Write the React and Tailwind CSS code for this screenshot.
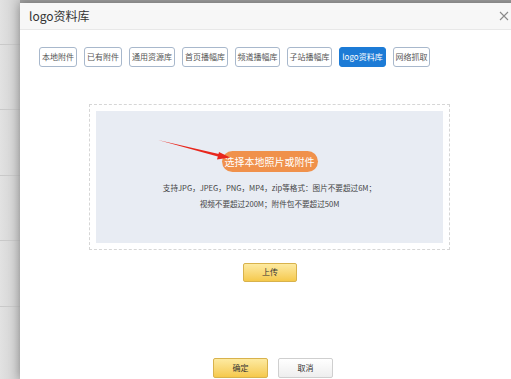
import React from 'react';

const tabs = [
  { label: '本地附件', w: 'w-[38px]' },
  { label: '已有附件', w: 'w-[38px]' },
  { label: '通用资源库', w: 'w-[46px]' },
  { label: '首页播幅库', w: 'w-[46px]' },
  { label: '频道播幅库', w: 'w-[45px]' },
  { label: '子站播幅库', w: 'w-[45px]' },
  { label: 'logo资料库', w: 'w-[47px]', active: true },
  { label: '网络抓取', w: 'w-[37px]' },
];

const font = { fontFamily: '"Microsoft YaHei", "Noto Sans CJK SC", "Noto Sans", sans-serif' };

const App = () => {
  return (
    <div className="relative w-[511px] h-[379px] overflow-hidden bg-[#dedede] flex" style={font}>
      {/* page behind the overlay */}
      <div className="w-[20px] shrink-0 flex flex-col bg-gradient-to-r from-[#e2e2e2] to-[#cfcfcf]">
        <div className="h-[45px] border-b border-[#c9c9c9]" />
        <div className="h-[65px] border-b border-[#c9c9c9]" />
        <div className="h-[66px] border-b border-[#c9c9c9]" />
        <div className="h-[65px] border-b border-[#c9c9c9]" />
        <div className="h-[66px] border-b border-[#c9c9c9]" />
      </div>

      <div className="flex flex-col shrink-0">
        <div className="h-[3px] bg-[#a3a3a3]" />
        <div className="w-[500px] h-[400px] bg-white shadow-[0_0_10px_rgba(0,0,0,0.35)] flex flex-col">
          <div className="h-[27px] bg-[#f7f7f7] border-b border-[#e8e8e8] pl-[9px] pr-[10px] flex items-center justify-between">
            <span className="text-[12px] text-[#333]">logo资料库</span>
            <svg width="10" height="10" viewBox="0 0 10 10" className="mr-[1px]">
              <path d="M1 1L9 9M9 1L1 9" stroke="#8a8a8a" strokeWidth="1.1" />
            </svg>
          </div>

          <div className="pt-[17px] pl-[19px] flex gap-[7px]">
            {tabs.map(t => (
              <div
                key={t.label}
                className={`${t.w} h-[20px] rounded-[3px] border flex items-center justify-center text-[8px] ${t.active ? 'bg-[#1c7bd6] border-[#1c7bd6] text-white' : 'bg-white border-[#a8b8cc] text-[#555]'}`}
              >
                {t.label}
              </div>
            ))}
          </div>

          <div className="mt-[37px] ml-[69px] w-[361px] h-[146px] border border-dashed border-[#d6d6d6] p-[6px]">
            <div className="h-full bg-[#e8ecf3] flex flex-col items-center pt-[40px]">
              <div className="w-[96px] h-[21px] rounded-full bg-[#f0914b] text-white text-[10px] flex items-center justify-center">
                选择本地照片或附件
              </div>
              <div className="mt-[8px] text-[7.6px] leading-[16px] text-[#444] text-center">
                <p>支持JPG，JPEG，PNG，MP4，zip等格式：图片不要超过6M；</p>
                <p>视频不要超过200M；附件包不要超过50M</p>
              </div>
            </div>
          </div>

          <div className="mt-[13px] flex justify-center">
            <button className="w-[54px] h-[19px] border border-[#d8b24c] rounded-[2px] bg-gradient-to-b from-[#fdeaa0] to-[#f5c94a] text-[8px] text-[#333]">
              上传
            </button>
          </div>

          <div className="mt-[76px] pl-[193px] flex gap-[10px]">
            <button className="w-[55px] h-[20px] border border-[#d8b24c] rounded-[2px] bg-gradient-to-b from-[#fdeaa0] to-[#f5c94a] text-[8px] text-[#333]">
              确定
            </button>
            <button className="w-[55px] h-[20px] border border-[#cfcfcf] rounded-[2px] bg-gradient-to-b from-[#ffffff] to-[#eeeeee] text-[8px] text-[#333]">
              取消
            </button>
          </div>
        </div>
      </div>

      {/* red annotation arrow */}
      <svg className="absolute left-0 top-0 pointer-events-none" width="511" height="379">
        <polygon points="158,140 222,154.8 221.4,157.4" fill="#e8261c" />
        <polygon points="230,157.5 219,152 217,159.5" fill="#e8261c" />
      </svg>
    </div>
  );
};

export default App;
